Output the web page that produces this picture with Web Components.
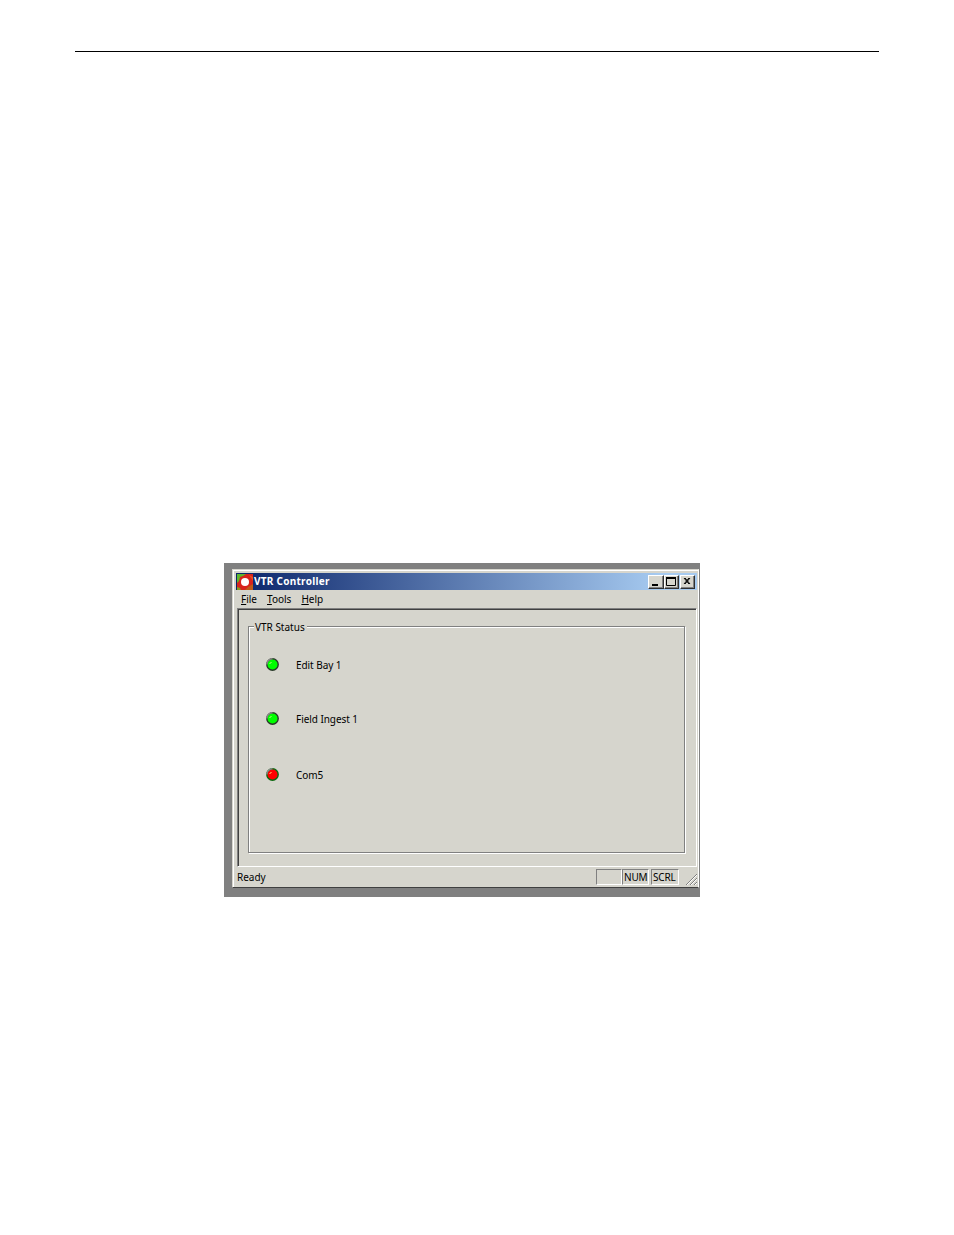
<!DOCTYPE html>
<html>
<head>
<meta charset="utf-8">
<title>VTR Controller</title>
<style>
  html, body { margin: 0; background: #fff; }
  body { font: 10px "Noto Sans", Arial, sans-serif; color: #000; }
</style>
</head>
<body>
<manual-page>
  <vtr-window>
    <title-bar slot="title">VTR Controller</title-bar>
    <menu-bar slot="menu"></menu-bar>
    <group-box label="VTR Status">
      <led-row color="green" gap="54">Edit Bay 1</led-row>
      <led-row color="green" gap="56">Field Ingest 1</led-row>
      <led-row color="red">Com5</led-row>
    </group-box>
    <status-bar slot="status">Ready</status-bar>
  </vtr-window>
</manual-page>

<script>
const UI_FONT = `font-family: "Noto Sans", Arial, sans-serif; font-size: 10px;`;
const FACE = '#d6d5cd';

class ManualPage extends HTMLElement {
  constructor() {
    super();
    this.attachShadow({mode: 'open'});
    this.shadowRoot.innerHTML = `
      <style>
        :host { display: block; width: 954px; height: 1235px; box-sizing: border-box; padding-top: 51px; }
        .rule { height: 1px; margin: 0 75px 0 75px; background: #000; }
        .shot { margin: 511px 0 0 224px; width: 476px; }
      </style>
      <div class="rule"></div>
      <div class="shot"><slot></slot></div>
    `;
  }
}

class VtrWindow extends HTMLElement {
  constructor() {
    super();
    this.attachShadow({mode: 'open'});
    this.shadowRoot.innerHTML = `
      <style>
        :host { display: block; width: 476px; height: 334px; box-sizing: border-box;
                padding: 6px 1px 9px 8px; background: #808080; ${UI_FONT} }
        .frame { height: 319px; box-sizing: border-box; background: ${FACE};
                 border-top: 1px solid ${FACE}; border-left: 1px solid ${FACE};
                 border-right: 1px solid #fff; border-bottom: 1px solid #404040;
                 display: flex; flex-direction: column; }
        .inner { flex: 1; display: flex; flex-direction: column; min-height: 0;
                 border-top: 1px solid #fff; border-left: 1px solid #fff;
                 padding: 2px 1px 0 2px; }
        .client { height: 259px; box-sizing: border-box; margin: 0 0 0 1px; flex: none;
                  border-top: 1px solid #808080; border-left: 1px solid #808080;
                  border-right: 1px solid #fff; border-bottom: 1px solid #fff;
                  box-shadow: inset 1px 1px 0 #404040;
                  padding: 17px 11px 13px 10px; }
      </style>
      <div class="frame">
        <div class="inner">
          <slot name="title"></slot>
          <slot name="menu"></slot>
          <div class="client"><slot></slot></div>
          <slot name="status"></slot>
        </div>
      </div>
    `;
  }
}

class TitleBar extends HTMLElement {
  constructor() {
    super();
    this.attachShadow({mode: 'open'});
    this.shadowRoot.innerHTML = `
      <style>
        :host { display: flex; align-items: center; height: 17px;
                background: linear-gradient(90deg, #0a246a, #a6caf0 92%);
                color: #fff; font-weight: bold; letter-spacing: .27px; }
        svg { flex: none; margin: 0 1px 0 1px; }
        .t { flex: 1; line-height: 17px; }
        .btns { display: flex; margin-right: 2px; }
      </style>
      <svg width="16" height="16" viewBox="0 0 16 16">
        <rect width="16" height="16" fill="#d8241c"/>
        <path d="M0 0h9l-3 2-3 1-1 4-2 2z" fill="#5cb82c"/>
        <path d="M0 13l3 1 1 2H0z" fill="#8a9a20"/>
        <path d="M11 13l5-3v6h-8z" fill="#c05a18"/>
        <path d="M12 1l4 2v4l-2-3z" fill="#e8501c"/>
        <circle cx="8" cy="8" r="4" fill="#fff"/>
      </svg>
      <div class="t"><slot></slot></div>
      <div class="btns">
        <win-btn kind="min" style="width:16px"></win-btn>
        <win-btn kind="max"></win-btn>
        <win-btn kind="close" style="margin-left:1px"></win-btn>
      </div>
    `;
  }
}

class WinBtn extends HTMLElement {
  constructor() {
    super();
    const glyphs = {
      min: '<rect x="3" y="8" width="6" height="2" fill="#000"/>',
      max: '<path d="M1.5 1.5h9v8h-9z" fill="none" stroke="#000"/><rect x="1" y="1" width="10" height="2" fill="#000"/>',
      close: '<path d="M3 2l5 6M4 2l5 6M8 2l-5 6M9 2l-5 6" stroke="#000" fill="none"/>'
    };
    this.attachShadow({mode: 'open'});
    this.shadowRoot.innerHTML = `
      <style>
        :host { display: block; width: 15px; height: 14px; box-sizing: border-box; background: ${FACE};
                border-top: 1px solid #fff; border-left: 1px solid #fff;
                border-right: 1px solid #303030; border-bottom: 1px solid #303030;
                box-shadow: inset -1px -1px 0 #808080; }
        svg { display: block; }
      </style>
      <svg width="13" height="12" viewBox="0 0 13 12">${glyphs[this.getAttribute('kind')]}</svg>
    `;
  }
}

class MenuBar extends HTMLElement {
  constructor() {
    super();
    this.attachShadow({mode: 'open'});
    this.shadowRoot.innerHTML = `
      <style>
        :host { display: flex; height: 18px; align-items: center; padding-left: 5px; gap: 10px; }
        u { text-decoration-thickness: 1px; text-underline-offset: 1px; }
      </style>
      <span><u>F</u>ile</span><span><u>T</u>ools</span><span><u>H</u>elp</span>
    `;
  }
}

class GroupBox extends HTMLElement {
  constructor() {
    super();
    this.attachShadow({mode: 'open'});
    this.shadowRoot.innerHTML = `
      <style>
        :host { display: block; position: relative; height: 227px; box-sizing: border-box;
                border: 1px solid #808080; box-shadow: 1px 1px 0 #fff, inset 1px 1px 0 #fff;
                padding: 31px 0 0 17px; }
        .label { position: absolute; left: 5px; top: -6px; padding: 0 2px 0 1px; background: ${FACE};
                 line-height: 13px; }
      </style>
      <div class="label">${this.getAttribute('label')}</div>
      <slot></slot>
    `;
  }
}

class LedRow extends HTMLElement {
  constructor() {
    super();
    const red = this.getAttribute('color') === 'red';
    const gap = this.getAttribute('gap') || 0;
    this.attachShadow({mode: 'open'});
    this.shadowRoot.innerHTML = `
      <style>
        :host { display: flex; align-items: center; height: 14px; letter-spacing: -.06px;
                margin-bottom: ${gap - 14 > 0 ? gap - 14 : 0}px; }
        svg { flex: none; margin-right: 16px; }
      </style>
      <svg width="14" height="14" viewBox="0 0 14 14">
        <circle cx="6.5" cy="6.5" r="5.7" fill="${red ? '#ff0000' : '#00ff00'}" stroke="${red ? '#0a6a10' : '#2a3a2a'}" stroke-width="1.4"/>
        <path d="M.8 6.5A5.7 5.7 0 0 1 6.5 .8" fill="none" stroke="#8a8a8a" stroke-width="1.5"/>
        <path d="M3.5 6L5.5 4" stroke="${red ? '#ffe080' : '#c0ff80'}" stroke-width="1"/>
      </svg>
      <span><slot></slot></span>
    `;
  }
}

class StatusBar extends HTMLElement {
  constructor() {
    super();
    this.attachShadow({mode: 'open'});
    this.shadowRoot.innerHTML = `
      <style>
        :host { display: flex; align-items: center; flex: 1; padding-left: 1px; }
        .t { flex: 1; }
        .p { box-sizing: border-box; height: 16px; line-height: 15px; padding-left: 1px;
             border: 1px solid; border-color: #808080 #fff #fff #808080; white-space: nowrap;
             letter-spacing: -.2px; }
        svg { display: block; margin: 4px 0 0 6px; flex: none; }
      </style>
      <span class="t"><slot></slot></span>
      <span class="p" style="width:26px"></span>
      <span class="p" style="width:27px">NUM</span>
      <span class="p" style="width:28px;margin-left:2px">SCRL</span>
      <svg width="12" height="12" viewBox="0 0 12 12">
        <path d="M1 12L12 1M5 12L12 5M9 12L12 9" stroke="#808080" fill="none"/>
        <path d="M2 12L12 2M6 12L12 6M10 12L12 10" stroke="#fff" fill="none"/>
      </svg>
    `;
  }
}

customElements.define('manual-page', ManualPage);
customElements.define('vtr-window', VtrWindow);
customElements.define('win-btn', WinBtn);
customElements.define('title-bar', TitleBar);
customElements.define('menu-bar', MenuBar);
customElements.define('group-box', GroupBox);
customElements.define('led-row', LedRow);
customElements.define('status-bar', StatusBar);
</script>
</body>
</html>
